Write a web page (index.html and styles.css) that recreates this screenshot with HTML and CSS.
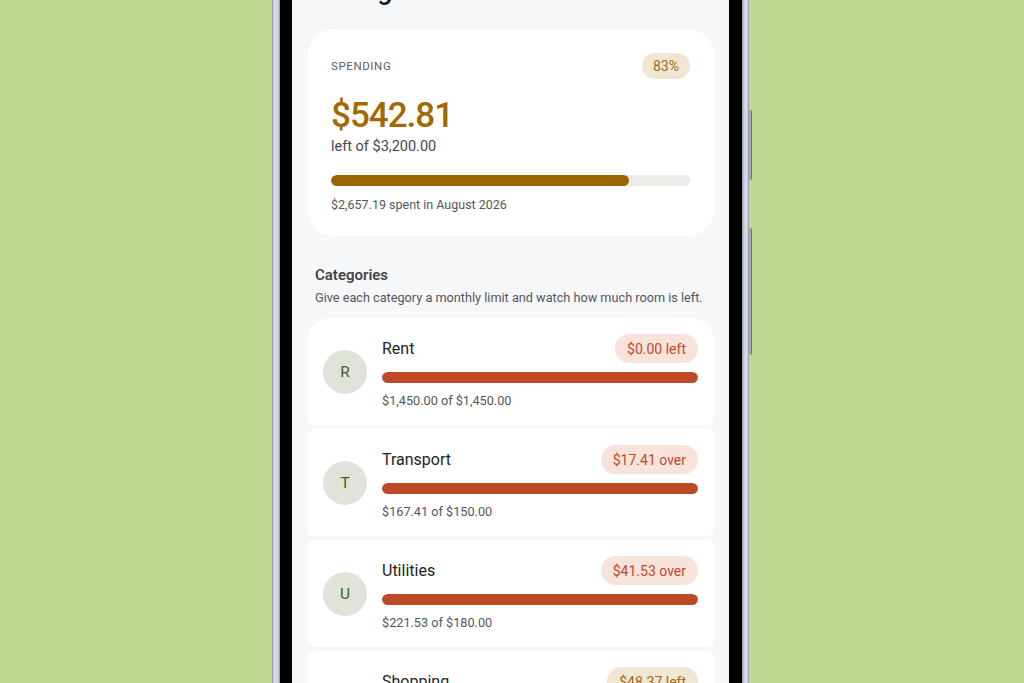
FILE: index.html
```html
<!DOCTYPE html>
<html lang="en">
<head>
<meta charset="utf-8">
<title>Budgets</title>
<link rel="stylesheet" href="styles.css">
</head>
<body>
<div class="stage">
  <div class="phone">
    <span class="btn btn-top"></span>
    <span class="btn btn-mid"></span>
    <div class="bezel">
      <div class="screen">
        <h1 class="title">Budgets</h1>

        <section class="summary">
          <div class="summary-head">
            <span class="eyebrow">SPENDING</span>
            <span class="pill pill-gold">83%</span>
          </div>
          <div class="amount">$542.81</div>
          <div class="amount-sub">left of $3,200.00</div>
          <div class="track track-summary"><div class="fill fill-gold" style="width:83%"></div></div>
          <div class="note">$2,657.19 spent in August 2026</div>
        </section>

        <div class="section-head">
          <div class="section-title">Categories</div>
          <div class="section-sub">Give each category a monthly limit and watch how much room is left.</div>
        </div>

        <div class="list">
          <div class="item item-first">
            <div class="avatar">R</div>
            <div class="item-body">
              <div class="item-row">
                <span class="item-name">Rent</span>
                <span class="pill pill-red">$0.00 left</span>
              </div>
              <div class="track"><div class="fill fill-red" style="width:100%"></div></div>
              <div class="note">$1,450.00 of $1,450.00</div>
            </div>
          </div>
          <div class="item">
            <div class="avatar">T</div>
            <div class="item-body">
              <div class="item-row">
                <span class="item-name">Transport</span>
                <span class="pill pill-red">$17.41 over</span>
              </div>
              <div class="track"><div class="fill fill-red" style="width:100%"></div></div>
              <div class="note">$167.41 of $150.00</div>
            </div>
          </div>
          <div class="item">
            <div class="avatar">U</div>
            <div class="item-body">
              <div class="item-row">
                <span class="item-name">Utilities</span>
                <span class="pill pill-red">$41.53 over</span>
              </div>
              <div class="track"><div class="fill fill-red" style="width:100%"></div></div>
              <div class="note">$221.53 of $180.00</div>
            </div>
          </div>
          <div class="item">
            <div class="avatar">S</div>
            <div class="item-body">
              <div class="item-row">
                <span class="item-name">Shopping</span>
                <span class="pill pill-gold">$48.37 left</span>
              </div>
              <div class="track"><div class="fill fill-gold" style="width:80%"></div></div>
              <div class="note">$201.63 of $250.00</div>
            </div>
          </div>
        </div>
      </div>
    </div>
  </div>
</div>
</body>
</html>
```

FILE: styles.css
```css
* { box-sizing: border-box; }

html, body {
  margin: 0;
  padding: 0;
  height: 683px;
  overflow: hidden;
  background: #bed68f;
  font-family: Roboto, "Noto Sans", Arial, sans-serif;
}

.stage {
  display: flex;
  justify-content: center;
  padding-right: 3px;
}

.phone {
  position: relative;
  width: 477px;
  margin-top: -80px;
  padding: 0 7px 0 8px;
  background: linear-gradient(90deg, #8c8e9c 0, #d9dbe8 2px, #cfd1df 6px, #8f91a0 8px);
  border-radius: 60px;
  height: 900px;
}

.phone::after {
  content: "";
  position: absolute;
  top: 0;
  bottom: 0;
  right: 0;
  width: 7px;
  background: linear-gradient(90deg, #8f91a0 0, #cfd1df 2px, #d9dbe8 5px, #8c8e9c 7px);
  border-radius: 0 60px 60px 0;
}

.btn {
  position: absolute;
  right: -3px;
  width: 4px;
  background: #a7a9b8;
  border-radius: 0 2px 2px 0;
  border-right: 1px solid #6e7080;
}

.btn-top { top: 190px; height: 70px; }
.btn-mid { top: 308px; height: 127px; }

.bezel {
  position: relative;
  z-index: 1;
  height: 100%;
  background: #000;
  padding: 0 13px 0 12px;
  border-radius: 52px;
}

.screen {
  height: 100%;
  background: #f6f7f9;
  padding: 52px 15px 0 16px;
}

.title {
  margin: 0 0 21px 22px;
  font-size: 27px;
  line-height: 36px;
  font-weight: 500;
  color: #1d1d22;
}

.summary {
  background: #fff;
  border-radius: 26px;
  padding: 24px 24px 23px 23px;
}

.summary-head {
  display: flex;
  justify-content: space-between;
  align-items: center;
}

.eyebrow {
  font-size: 11.5px;
  letter-spacing: 0.6px;
  color: #5f6066;
}

.pill {
  display: inline-flex;
  align-items: center;
  border-radius: 15px;
  font-size: 14px;
  padding: 0 12px;
}

.summary .pill { height: 26px; padding: 0 11px; }

.pill-gold { background: #f1e6d3; color: #9b6b16; }
.pill-red { background: #f7e2dc; color: #c04a2a; }

.amount {
  margin-top: 17px;
  font-size: 35px;
  line-height: 40px;
  font-weight: 500;
  letter-spacing: -1px;
  color: #a16a00;
}

.amount-sub {
  margin-top: 1px;
  font-size: 14.5px;
  line-height: 20px;
  color: #46474c;
}

.track {
  height: 11px;
  border-radius: 6px;
  background: #ecece9;
  overflow: hidden;
}

.track-summary { margin-top: 18px; height: 11px; }

.fill { height: 100%; border-radius: 6px; }
.fill-gold { background: #9c6400; }
.fill-red { background: #bd4a26; }

.note {
  font-size: 12.5px;
  line-height: 16px;
  color: #55565b;
  margin-top: 11px;
}

.section-head {
  padding: 30px 7px 12px;
}

.section-title {
  font-size: 15px;
  font-weight: 600;
  line-height: 18px;
  color: #43444b;
}

.section-sub {
  margin-top: 6px;
  font-size: 12.7px;
  line-height: 16px;
  color: #55565b;
}

.list {
  display: flex;
  flex-direction: column;
  gap: 4px;
}

.item {
  display: flex;
  align-items: center;
  gap: 15px;
  background: #fff;
  border-radius: 6px;
  padding: 16px 16px 16px 15px;
}

.item-first { border-radius: 22px 22px 6px 6px; }

.avatar {
  flex: none;
  width: 44px;
  height: 44px;
  border-radius: 50%;
  background: #dfe3da;
  color: #485d1f;
  font-size: 15.5px;
  display: flex;
  align-items: center;
  justify-content: center;
}

.item-body {
  flex: 1;
  display: flex;
  flex-direction: column;
}

.item-row {
  display: flex;
  justify-content: space-between;
  align-items: center;
  height: 29px;
  margin-bottom: 9px;
}

.item-row .pill { height: 29px; }

.item-name {
  font-size: 16px;
  color: #222327;
}

.item .note { margin-top: 9px; font-size: 12.7px; line-height: 17px; }
```
